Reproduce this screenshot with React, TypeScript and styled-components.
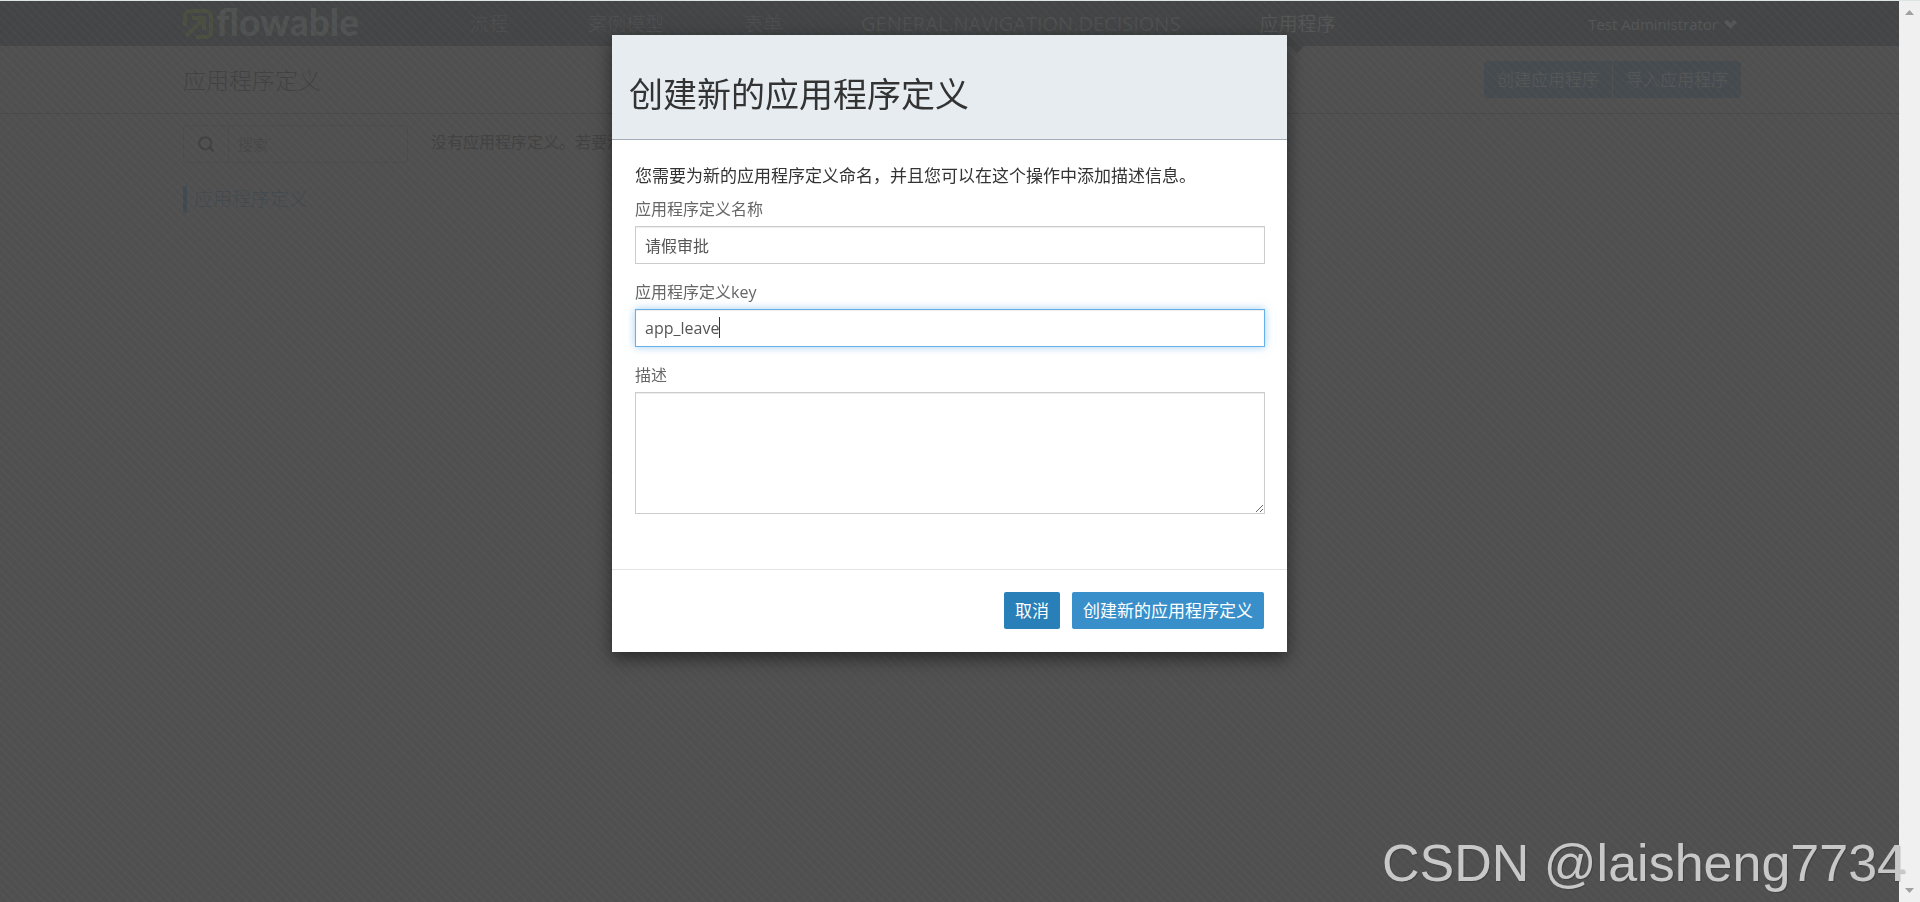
import React from "react";
import styled, { createGlobalStyle } from "styled-components";
import { Search } from "lucide-react";

const GlobalStyle = createGlobalStyle`
  *, *::before, *::after { box-sizing: border-box; }
  body {
    margin: 0;
    background: #505050;
    color: #424242;
    font-family: "Open Sans", "Noto Sans CJK SC", sans-serif;
    font-size: 16px;
    line-height: 24px;
  }
  h1, h2, p { margin: 0; font-weight: 400; }
  button, input, textarea { font: inherit; margin: 0; }
  a { color: inherit; text-decoration: none; }
`;

const SCROLLBAR = 21;

const Page = styled.div`
  min-height: 100vh;
  padding-right: ${SCROLLBAR}px;
  border-top: 1px solid #dce4e3;
`;

const Container = styled.div`
  display: flex;
  max-width: 1583px;
  margin: 0 auto;
  padding-left: 25px;
`;

const TopBar = styled.header`
  background: #434546;
  color: #4f5051;
`;

const TopBarInner = styled(Container)`
  height: 45px;
  align-items: center;
`;

const Brand = styled.a`
  display: flex;
  align-items: center;
  gap: 3px;
  width: 247px;
  color: #505252;
  font-family: Lato, sans-serif;
  font-size: 37px;
  font-weight: 900;
  line-height: 32px;
`;

const BrandName = styled.span`
  padding-bottom: 4px;
`;

const Nav = styled.nav`
  display: flex;
  flex: 1;
  white-space: nowrap;
`;

const NavLink = styled.a<{ $active?: boolean }>`
  position: relative;
  padding: 0 40px;
  font-size: 19px;
  font-weight: ${(p) => (p.$active ? 400 : 300)};
  line-height: 44px;
  color: ${(p) => (p.$active ? "#555555" : "#4f5051")};
  &:lang(en) {
    padding: 0 39px;
    font-size: 20px;
    font-weight: 400;
  }
  ${(p) =>
    p.$active &&
    `&::after {
      content: "";
      position: absolute;
      top: 44px;
      left: 50%;
      margin-left: -7px;
      border: 7px solid transparent;
      border-bottom-width: 0;
      border-top-color: #434546;
    }`}
`;

const UserMenu = styled.button`
  display: flex;
  align-items: center;
  gap: 6px;
  padding: 0 4px;
  border: 0;
  background: none;
  color: #555657;
  font-size: 15px;
  white-space: nowrap;
`;

const SubHeader = styled.div`
  border-bottom: 1px solid #494949;
`;

const SubHeaderInner = styled(Container)`
  height: 67px;
  align-items: center;
  justify-content: space-between;
`;

const PageTitle = styled.h2`
  font-size: 23px;
  font-weight: 300;
  line-height: 30px;
`;

const ButtonGroup = styled.div`
  display: flex;
  gap: 1px;
  border-radius: 4px;
  overflow: hidden;
`;

const GroupButton = styled.button`
  height: 37px;
  padding: 0 13px;
  border: 0;
  background: #454b4f;
  color: #545555;
  font-size: 17px;
`;

const Content = styled(Container)`
  padding-top: 11px;
  gap: 23px;
`;

const Sidebar = styled.aside`
  width: 225px;
`;

const SearchBox = styled.div`
  display: flex;
  height: 38px;
  border: 1px solid #4c4c4c;
  border-radius: 4px;
`;

const SearchLabel = styled.label`
  display: flex;
  align-items: center;
  justify-content: center;
  width: 45px;
  border-right: 1px solid #4c4c4c;
`;

const SearchInput = styled.input`
  flex: 1;
  min-width: 0;
  padding: 0 9px;
  border: 0;
  background: none;
  font-size: 15px;
  &::placeholder { color: #484848; opacity: 1; }
`;

const FilterLink = styled.a`
  display: block;
  margin-top: 23px;
  padding-left: 7px;
  border-left: 4px solid #414a50;
  color: #424a4f;
  font-size: 19px;
  font-weight: 300;
  line-height: 27px;
`;

const EmptyText = styled.p`
  padding-top: 5px;
`;

const Backdrop = styled.div`
  position: fixed;
  inset: 1px ${SCROLLBAR}px 0 0;
  background:
    repeating-linear-gradient(45deg, rgba(255, 255, 255, 0.02) 0 2px, transparent 2px 6px),
    repeating-linear-gradient(135deg, rgba(0, 0, 0, 0.01) 0 3px, transparent 3px 7px);
`;

const ModalLayer = styled.div`
  position: fixed;
  inset: 0 ${SCROLLBAR}px 0 0;
  display: flex;
  align-items: flex-start;
  justify-content: center;
  padding-top: 35px;
`;

const Dialog = styled.form`
  width: 675px;
  background: #fff;
  color: #333;
  box-shadow: 0 6px 17px rgba(0, 0, 0, 0.5);
`;

const DialogHeader = styled.div`
  padding: 35px 17px 21px;
  border-bottom: 1px solid #a4aeb9;
  background: #e7ecf0;
`;

const DialogTitle = styled.h1`
  font-size: 34px;
  line-height: 48px;
`;

const DialogBody = styled.div`
  display: flex;
  flex-direction: column;
  padding: 24px 22px 55px 23px;
`;

const Intro = styled.p`
  margin-bottom: 9px;
  font-size: 17px;
`;

const Field = styled.div`
  display: flex;
  flex-direction: column;
  gap: 5px;
  & + & { margin-top: 16px; }
`;

const Label = styled.label`
  color: #666;
`;

const inputBox = `
  width: 100%;
  padding: 6px 9px;
  border: 1px solid #ccc;
  border-radius: 0;
  background: #fff;
  color: #555;
  box-shadow: inset 0 1px 1px rgba(0, 0, 0, 0.075);
  outline: none;
  &:focus {
    border-color: #66afe9;
    box-shadow: inset 0 1px 1px rgba(0, 0, 0, 0.075), 0 0 8px rgba(102, 175, 233, 0.6);
  }
`;

const TextInput = styled.input`
  ${inputBox}
  height: 38px;
`;

const CaretWrap = styled.div`
  position: relative;
`;

const Caret = styled.span`
  position: absolute;
  top: 8px;
  left: 84px;
  width: 1px;
  height: 21px;
  background: #333;
`;

const KeyInput = styled(TextInput)`
  display: block;
  caret-color: transparent;
`;

const TextArea = styled.textarea`
  ${inputBox}
  display: block;
  height: 122px;
  resize: vertical;
`;

const DialogFooter = styled.div`
  display: flex;
  justify-content: flex-end;
  gap: 12px;
  padding: 22px 23px 23px;
  border-top: 1px solid #e5e5e5;
`;

const ActionButton = styled.button<{ $dark?: boolean }>`
  height: 37px;
  padding: 0 11px;
  border: 0;
  border-radius: 2px;
  background: ${(p) => (p.$dark ? "#297fb8" : "#398fca")};
  color: #fff;
  font-size: 17px;
`;

const ScrollTrack = styled.div`
  position: fixed;
  inset: 1px 0 0 auto;
  display: flex;
  flex-direction: column;
  align-items: center;
  justify-content: space-between;
  width: ${SCROLLBAR}px;
  padding: 9px 0;
  background: #f0f0f0;
`;

const Watermark = styled.div`
  position: fixed;
  right: 14px;
  bottom: 9px;
  color: #c8c8c8;
  font-family: "Liberation Sans", sans-serif;
  font-size: 52px;
  line-height: 60px;
  text-shadow: 1px 1px 1px rgba(0, 0, 0, 0.2);
  white-space: nowrap;
  pointer-events: none;
`;

const BrandMark = () => (
  <svg width="30" height="30" viewBox="0 0 30 30" fill="none" stroke="#4a4f42" strokeWidth="4">
    <path d="M2 17V7a5 5 0 0 1 5-5h16a5 5 0 0 1 5 5v16a5 5 0 0 1-5 5H13" />
    <path d="M9 9h12v12M21 9 3 27" />
  </svg>
);

const Chevron = () => (
  <svg width="13" height="10" viewBox="0 0 13 10" fill="none" stroke="currentColor" strokeWidth="4">
    <path d="M1.500 2 6.500 7 11.500 2" />
  </svg>
);

const navItems = [
  { label: "流程", lang: "zh" },
  { label: "案例模型", lang: "zh" },
  { label: "表单", lang: "zh" },
  { label: "GENERAL.NAVIGATION.DECISIONS", lang: "en" },
  { label: "应用程序", lang: "zh", active: true },
];

export default function App() {
  return (
    <>
      <GlobalStyle />
      <Page>
        <TopBar>
          <TopBarInner>
            <Brand href="#">
              <BrandMark />
              <BrandName>flowable</BrandName>
            </Brand>
            <Nav>
              {navItems.map((item) => (
                <NavLink key={item.label} href="#" lang={item.lang} $active={item.active}>
                  {item.label}
                </NavLink>
              ))}
            </Nav>
            <UserMenu type="button">
              Test Administrator
              <Chevron />
            </UserMenu>
          </TopBarInner>
        </TopBar>
        <SubHeader>
          <SubHeaderInner>
            <PageTitle>应用程序定义</PageTitle>
            <ButtonGroup>
              <GroupButton type="button">创建应用程序</GroupButton>
              <GroupButton type="button">导入应用程序</GroupButton>
            </ButtonGroup>
          </SubHeaderInner>
        </SubHeader>
        <Content as="main">
          <Sidebar>
            <SearchBox>
              <SearchLabel htmlFor="search" aria-label="搜索">
                <Search size={18} strokeWidth={3} />
              </SearchLabel>
              <SearchInput id="search" placeholder="搜索" />
            </SearchBox>
            <FilterLink href="#">应用程序定义</FilterLink>
          </Sidebar>
          <EmptyText>没有应用程序定义。若要添加</EmptyText>
        </Content>
      </Page>
      <Backdrop />
      <ModalLayer>
        <Dialog role="dialog" aria-labelledby="dialog-title">
          <DialogHeader>
            <DialogTitle id="dialog-title">创建新的应用程序定义</DialogTitle>
          </DialogHeader>
          <DialogBody>
            <Intro>您需要为新的应用程序定义命名，并且您可以在这个操作中添加描述信息。</Intro>
            <Field>
              <Label htmlFor="app-name">应用程序定义名称</Label>
              <TextInput id="app-name" defaultValue="请假审批" />
            </Field>
            <Field>
              <Label htmlFor="app-key">应用程序定义key</Label>
              <CaretWrap>
                <KeyInput id="app-key" defaultValue="app_leave" autoFocus />
                <Caret />
              </CaretWrap>
            </Field>
            <Field>
              <Label htmlFor="app-description">描述</Label>
              <TextArea id="app-description" />
            </Field>
          </DialogBody>
          <DialogFooter>
            <ActionButton type="button" $dark>取消</ActionButton>
            <ActionButton type="button">创建新的应用程序定义</ActionButton>
          </DialogFooter>
        </Dialog>
      </ModalLayer>
      <ScrollTrack aria-hidden="true">
        <svg width="9" height="5" viewBox="0 0 9 5" fill="#a0a0a0"><path d="M0 5 4.500 0 9 5z" /></svg>
        <svg width="9" height="5" viewBox="0 0 9 5" fill="#a0a0a0"><path d="M0 0h9L4.500 5z" /></svg>
      </ScrollTrack>
      <Watermark>CSDN @laisheng7734</Watermark>
    </>
  );
}
